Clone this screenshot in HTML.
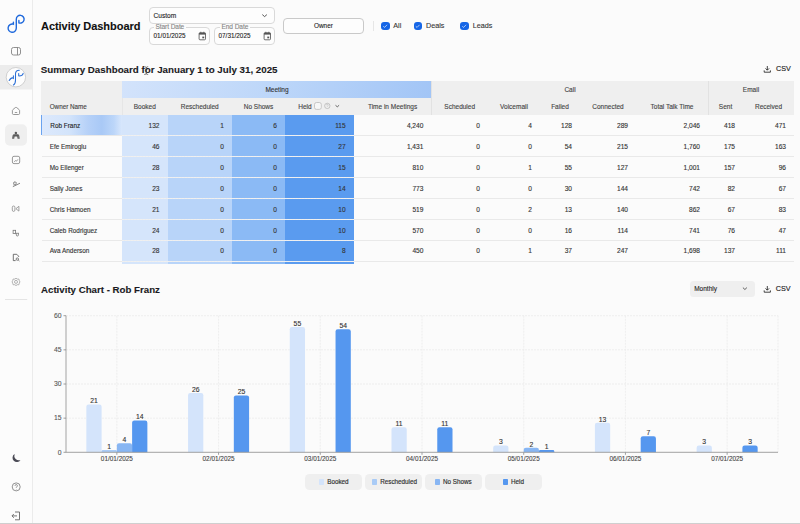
<!DOCTYPE html>
<html><head><meta charset="utf-8">
<style>
*{box-sizing:border-box;margin:0;padding:0}
html,body{width:800px;height:524px;overflow:hidden;background:#fbfbfb;font-family:"Liberation Sans",sans-serif;color:#222}
.a{position:absolute}
#side{left:0;top:0;width:32px;height:523px;background:#fcfcfc;border-right:1px solid #ebebeb;width:33px}
.ic{position:absolute;left:0;width:32px}
.t{position:absolute;white-space:nowrap;line-height:1;-webkit-text-stroke:0.1px currentColor}
.box{position:absolute;border:1px solid #d9d9d9;border-radius:4px;background:#fdfdfd}
.cb{position:absolute;width:8.5px;height:8.5px;border-radius:3px;background:#1565e6}
.cell{position:absolute;white-space:nowrap;line-height:1;font-size:6.4px;color:#333;-webkit-text-stroke:0.12px currentColor}
</style></head><body>
<!-- sidebar -->
<div id="side" class="a">
  <svg class="a" style="left:0;top:0" width="32" height="524" viewBox="0 0 32 524">
    <!-- logo -->
    <path d="M13.4 22.1V24.2A4.1 4.1 0 1 0 16.3 28.1V19.2A3.9 3.9 0 1 1 18.9 22.9V20.4" fill="none" stroke="#1f69dc" stroke-width="1.4" stroke-linecap="round"/>
    <!-- panel icon -->
    <rect x="11.5" y="47.5" width="9" height="7.5" rx="2" fill="none" stroke="#858585" stroke-width="0.9"/>
    <line x1="17.5" y1="47.5" x2="17.5" y2="55" stroke="#858585" stroke-width="0.9"/>
    <!-- highlight band -->
    <rect x="0" y="65" width="32" height="24.5" fill="#ececec"/>
    <circle cx="15.9" cy="77.2" r="9.7" fill="#fdfdfd" stroke="#c6c6c6" stroke-width="0.8"/>
    <path d="M9.2 80.5Q10.8 77.6 13.4 77.6M13.4 75.8V78.6M13.4 85Q15.5 84 15.5 80V73.8Q15.6 70.3 19.3 70.3M23.2 73.4Q22.6 76 19.2 76M18.7 73.4V75.8" fill="none" stroke="#2b6fd6" stroke-width="1.05" stroke-linecap="round"/>
    <!-- home -->
    <path d="M12.4 110.6Q12.4 110 12.9 109.6L15.3 107.6Q16 107 16.7 107.6L19.1 109.6Q19.6 110 19.6 110.6V113.4Q19.6 114.5 18.5 114.5H13.5Q12.4 114.5 12.4 113.4Z" fill="none" stroke="#858585" stroke-width="0.85" stroke-linejoin="round"/>
    <line x1="15.2" y1="112.5" x2="16.8" y2="112.5" stroke="#858585" stroke-width="0.8" stroke-linecap="round"/>
    <!-- active bg -->
    <rect x="5" y="124.3" width="22" height="21.4" rx="5" fill="#efefef"/>
    <circle cx="15.9" cy="133.1" r="1.25" fill="#5a5a5a"/>
    <path d="M12.1 138.7L12.6 135.6Q12.9 134.3 14.2 134.3H17.6Q18.9 134.3 19.2 135.6L19.7 138.7H17.6L17.2 136.4H14.6L14.2 138.7Z" fill="#5a5a5a"/>
    <path d="M13.3 135.5V138.7M18.5 135.5V138.7" stroke="#9a9a9a" stroke-width="0.35"/>
    <!-- chart icon -->
    <rect x="12.4" y="156.3" width="7.3" height="7.3" rx="1.6" fill="none" stroke="#858585" stroke-width="0.85"/>
    <path d="M14.2 161.7L15.6 160.6L16.4 161.2L17.9 159.4" fill="none" stroke="#777" stroke-width="0.75" stroke-linejoin="round"/>
    <!-- sparkle/wand -->
    <path d="M13.2 186.5L19.6 183.4" fill="none" stroke="#777" stroke-width="0.9" stroke-linecap="round"/>
    <path d="M14.9 181.4L15.4 182.7L16.8 182.9L15.7 183.8L16 185.1L14.9 184.4L13.8 185.1L14.1 183.8L13 182.9L14.4 182.7Z" fill="none" stroke="#777" stroke-width="0.7" stroke-linejoin="round"/>
    <!-- pill + triangle -->
    <rect x="12.3" y="206" width="2.6" height="5.4" rx="1.3" fill="none" stroke="#8a8a8a" stroke-width="0.8"/>
    <path d="M18.9 206.3L15.9 208.7L18.9 211.1Z" fill="none" stroke="#8a8a8a" stroke-width="0.8" stroke-linejoin="round"/>
    <!-- nodes -->
    <rect x="13.1" y="230.3" width="2.5" height="3.2" fill="none" stroke="#777" stroke-width="0.8"/>
    <path d="M15.6 233.3H19M16.3 233.3V235Q16.3 236 17.4 236Q18.4 236 18.4 235V233.3" fill="none" stroke="#777" stroke-width="0.8"/>
    <!-- doc search -->
    <path d="M16.8 254.3H13.3V260.6H15.6M16.8 254.3L18.6 256.2V257" fill="none" stroke="#5a5a5a" stroke-width="0.85" stroke-linejoin="round"/>
    <circle cx="17.3" cy="259.1" r="1.2" fill="none" stroke="#5a5a5a" stroke-width="0.75"/>
    <line x1="18.2" y1="260" x2="19.4" y2="261" stroke="#5a5a5a" stroke-width="0.75"/>
    <!-- gear -->
    <path d="M16 278.2L17.2 279.1L18.8 279L19.3 280.6L19.9 281.9L19.3 283.2L18.8 284.8L17.2 284.7L16 285.6L14.8 284.7L13.2 284.8L12.7 283.2L12.1 281.9L12.7 280.6L13.2 279L14.8 279.1Z" fill="none" stroke="#999" stroke-width="0.75" stroke-linejoin="round"/>
    <circle cx="16" cy="281.9" r="1.5" fill="none" stroke="#999" stroke-width="0.75"/>
    <!-- separator -->
    <line x1="5" y1="299.5" x2="27.2" y2="299.5" stroke="#e4e4e4" stroke-width="1"/>
    <!-- moon -->
    <path d="M14.6 454.1A4.3 4.3 0 1 0 20.5 460A4.6 4.6 0 0 1 14.6 454.1Z" fill="#4a4a55"/>
    <!-- help -->
    <circle cx="16.2" cy="486.9" r="4" fill="none" stroke="#777" stroke-width="0.8"/>
    <path d="M15 485.8a1.2 1.2 0 1 1 1.8 1c-0.5 0.3-0.6 0.5-0.6 1" fill="none" stroke="#777" stroke-width="0.8"/>
    <circle cx="16.2" cy="489.3" r="0.35" fill="#777"/>
    <!-- logout -->
    <path d="M15 512H19.5V519.8H15M17 515.9H12M13.8 514L12 515.9L13.8 517.8" fill="none" stroke="#666" stroke-width="0.9" stroke-linejoin="round"/>
  </svg>
</div>
<div class="a" style="left:0;top:523px;width:800px;height:1px;background:#cfcfcf"></div>

<!-- header -->
<div class="t" style="left:41px;top:20.5px;font-size:11px;font-weight:bold;color:#111;letter-spacing:-0.05px">Activity Dashboard</div>
<div class="box" style="left:149px;top:7px;width:126px;height:16.5px"></div>
<div class="t" style="left:153.5px;top:13px;font-size:6.6px;color:#222">Custom</div>
<svg class="a" style="left:261px;top:13px" width="8" height="6"><path d="M1.3 1.6L3.6 3.6L5.9 1.6" fill="none" stroke="#444" stroke-width="0.9"/></svg>

<div class="box" style="left:149px;top:27px;width:61px;height:17.5px"></div>
<div class="t" style="left:154px;top:24.2px;font-size:6.6px;color:#858585;letter-spacing:-0.1px;background:#fbfbfb;padding:0 1.5px">Start Date</div>
<div class="t" style="left:153.5px;top:32.5px;font-size:6.4px;color:#222">01/01/2025</div>
<svg class="a" style="left:197px;top:31px" width="10" height="10"><rect x="2.1" y="1.8" width="6.4" height="7" rx="0.9" fill="none" stroke="#555" stroke-width="0.85"/><rect x="2.1" y="1.8" width="6.4" height="1.8" fill="#555"/><path d="M3.8 0.7V2M6.8 0.7V2" stroke="#555" stroke-width="0.7"/><rect x="5.3" y="5.6" width="1.9" height="1.7" fill="#555"/></svg>

<div class="box" style="left:214px;top:27px;width:61px;height:17.5px"></div>
<div class="t" style="left:220px;top:24.2px;font-size:6.6px;color:#858585;letter-spacing:-0.1px;background:#fbfbfb;padding:0 1.5px">End Date</div>
<div class="t" style="left:218.5px;top:32.5px;font-size:6.4px;color:#222">07/31/2025</div>
<svg class="a" style="left:262px;top:31px" width="10" height="10"><rect x="2.1" y="1.8" width="6.4" height="7" rx="0.9" fill="none" stroke="#555" stroke-width="0.85"/><rect x="2.1" y="1.8" width="6.4" height="1.8" fill="#555"/><path d="M3.8 0.7V2M6.8 0.7V2" stroke="#555" stroke-width="0.7"/><rect x="5.3" y="5.6" width="1.9" height="1.7" fill="#555"/></svg>

<div class="box" style="left:283px;top:17.5px;width:81px;height:16px;border-color:#c9c9c9"></div>
<div class="t" style="left:314px;top:22.5px;font-size:6.4px;color:#222">Owner</div>
<div class="a" style="left:372.5px;top:20.5px;width:1px;height:10px;background:#e6e6e6"></div>

<div class="cb" style="left:381px;top:21.6px"></div>
<div class="cb" style="left:413.5px;top:21.6px"></div>
<div class="cb" style="left:460px;top:21.6px"></div>
<svg class="a" style="left:381px;top:21.6px" width="100" height="9">
  <path d="M2.6 4.6L3.6 5.4L5.8 3.1" fill="none" stroke="#e8f0fd" stroke-width="0.7" stroke-linecap="round" stroke-linejoin="round"/>
  <path transform="translate(32.5 0)" d="M2.6 4.6L3.6 5.4L5.8 3.1" fill="none" stroke="#e8f0fd" stroke-width="0.7" stroke-linecap="round" stroke-linejoin="round"/>
  <path transform="translate(79 0)" d="M2.6 4.6L3.6 5.4L5.8 3.1" fill="none" stroke="#e8f0fd" stroke-width="0.7" stroke-linecap="round" stroke-linejoin="round"/>
</svg>
<div class="t" style="left:393.3px;top:22px;font-size:7.2px;color:#333">All</div>
<div class="t" style="left:426px;top:22px;font-size:7.2px;color:#333">Deals</div>
<div class="t" style="left:472.7px;top:22px;font-size:7.2px;color:#333">Leads</div>

<!-- summary title -->
<div class="t" style="left:40.7px;top:64.8px;font-size:9.75px;font-weight:bold;color:#1a1a22">Summary Dashboard for January 1 to July 31, 2025</div>
<svg class="a" style="left:763px;top:65px" width="9" height="9"><path d="M4.3 1V5.1M2.5 3.4L4.3 5.2L6.1 3.4M1.2 5.4V7.2H7.4V5.4" fill="none" stroke="#222" stroke-width="0.85"/></svg>
<div class="t" style="left:776px;top:65.3px;font-size:7.2px;color:#1e1e1e;-webkit-text-stroke:0.15px #1e1e1e">CSV</div>

<div class="a" style="left:41px;top:81px;width:753px;height:34px;background:#efefef"></div>
<div class="a" style="left:122px;top:81px;width:309.4px;height:16.599999999999994px;background:linear-gradient(100deg,#d3e3fb 0%,#bcd6f9 50%,#a2c5f6 100%)"></div>
<div class="a" style="left:431.4px;top:81px;width:0.8px;height:34px;background:#e2e2e2"></div>
<div class="a" style="left:708px;top:81px;width:0.8px;height:34px;background:#e2e2e2"></div>
<div class="a" style="left:122px;top:97.6px;width:0.8px;height:17.400000000000006px;background:#e6e6e6"></div>
<div class="cell" style="left:227px;width:100px;text-align:center;top:87px;font-size:6.5px;color:#333;">Meeting</div>
<div class="cell" style="left:520px;width:100px;text-align:center;top:87px;font-size:6.5px;color:#444;">Call</div>
<div class="cell" style="left:701px;width:100px;text-align:center;top:87px;font-size:6.5px;color:#444;">Email</div>
<div class="cell" style="left:49.7px;top:104.1px;font-size:6.3px;color:#444;">Owner Name</div>
<div class="cell" style="left:94.75px;width:100px;text-align:center;top:104.1px;font-size:6.5px;color:#444;">Booked</div>
<div class="cell" style="left:149.75px;width:100px;text-align:center;top:104.1px;font-size:6.5px;color:#444;">Rescheduled</div>
<div class="cell" style="left:208.5px;width:100px;text-align:center;top:104.1px;font-size:6.5px;color:#444;">No Shows</div>
<div class="cell" style="left:298.2px;top:104.1px;font-size:6.5px;color:#444;">Held</div>
<div class="cell" style="left:342.54999999999995px;width:100px;text-align:center;top:104.1px;font-size:6.5px;color:#444;">Time in Meetings</div>
<div class="cell" style="left:409.7px;width:100px;text-align:center;top:104.1px;font-size:6.5px;color:#444;">Scheduled</div>
<div class="cell" style="left:464.0px;width:100px;text-align:center;top:104.1px;font-size:6.5px;color:#444;">Voicemail</div>
<div class="cell" style="left:510.0px;width:100px;text-align:center;top:104.1px;font-size:6.5px;color:#444;">Failed</div>
<div class="cell" style="left:558.0px;width:100px;text-align:center;top:104.1px;font-size:6.5px;color:#444;">Connected</div>
<div class="cell" style="left:622.0px;width:100px;text-align:center;top:104.1px;font-size:6.5px;color:#444;">Total Talk Time</div>
<div class="cell" style="left:675.5px;width:100px;text-align:center;top:104.1px;font-size:6.5px;color:#444;">Sent</div>
<div class="cell" style="left:718.5px;width:100px;text-align:center;top:104.1px;font-size:6.5px;color:#444;">Received</div>
<svg class="a" style="left:313px;top:100.8px" width="30" height="10"><rect x="1.5" y="1.5" width="6.8" height="6.9" rx="2" fill="#f7f7f7" stroke="#b8b8b8" stroke-width="0.75"/><circle cx="14.3" cy="4.9" r="2.7" fill="none" stroke="#aaa" stroke-width="0.6"/><path d="M13.4 4.2a0.9 0.9 0 1 1 1.3 0.8c-0.3 0.2-0.4 0.3-0.4 0.7" fill="none" stroke="#aaa" stroke-width="0.5"/><path d="M22.5 4.3L24.3 5.8L26.1 4.3" fill="none" stroke="#444" stroke-width="0.8"/></svg>
<div class="a" style="left:122px;top:115px;width:45.5px;height:149.39999999999998px;background:#d5e5fb"></div>
<div class="a" style="left:167.5px;top:115px;width:64.5px;height:149.39999999999998px;background:#b8d4f9"></div>
<div class="a" style="left:232px;top:115px;width:53px;height:149.39999999999998px;background:#8bbaf5"></div>
<div class="a" style="left:285px;top:115px;width:68.69999999999999px;height:149.39999999999998px;background:#5a9bef"></div>
<div class="a" style="left:41.5px;top:135.2px;width:752.5px;height:1px;background:#e9e9e9"></div>
<div class="a" style="left:122px;top:135.2px;width:231.7px;height:1px;background:repeating-linear-gradient(90deg,rgba(255,255,255,0.32) 0 2px,rgba(255,255,255,0.22) 2px 3px)"></div>
<div class="a" style="left:41.5px;top:156.1px;width:752.5px;height:1px;background:#e9e9e9"></div>
<div class="a" style="left:122px;top:156.1px;width:231.7px;height:1px;background:repeating-linear-gradient(90deg,rgba(255,255,255,0.32) 0 2px,rgba(255,255,255,0.22) 2px 3px)"></div>
<div class="a" style="left:41.5px;top:177.0px;width:752.5px;height:1px;background:#e9e9e9"></div>
<div class="a" style="left:122px;top:177.0px;width:231.7px;height:1px;background:repeating-linear-gradient(90deg,rgba(255,255,255,0.32) 0 2px,rgba(255,255,255,0.22) 2px 3px)"></div>
<div class="a" style="left:41.5px;top:197.89999999999998px;width:752.5px;height:1px;background:#e9e9e9"></div>
<div class="a" style="left:122px;top:197.89999999999998px;width:231.7px;height:1px;background:repeating-linear-gradient(90deg,rgba(255,255,255,0.32) 0 2px,rgba(255,255,255,0.22) 2px 3px)"></div>
<div class="a" style="left:41.5px;top:218.8px;width:752.5px;height:1px;background:#e9e9e9"></div>
<div class="a" style="left:122px;top:218.8px;width:231.7px;height:1px;background:repeating-linear-gradient(90deg,rgba(255,255,255,0.32) 0 2px,rgba(255,255,255,0.22) 2px 3px)"></div>
<div class="a" style="left:41.5px;top:239.7px;width:752.5px;height:1px;background:#e9e9e9"></div>
<div class="a" style="left:122px;top:239.7px;width:231.7px;height:1px;background:repeating-linear-gradient(90deg,rgba(255,255,255,0.32) 0 2px,rgba(255,255,255,0.22) 2px 3px)"></div>
<div class="a" style="left:41.5px;top:260.59999999999997px;width:752.5px;height:1px;background:#e9e9e9"></div>
<div class="a" style="left:122px;top:260.59999999999997px;width:231.7px;height:1px;background:repeating-linear-gradient(90deg,rgba(255,255,255,0.32) 0 2px,rgba(255,255,255,0.22) 2px 3px)"></div>
<div class="a" style="left:41px;top:115px;width:81px;height:20.2px;background:linear-gradient(90deg,#dde9fc 0%,#d3e4fb 35%,#b6d1f8 58%,#a9c9f6 75%,#bcd6f9 90%,#d8e7fc 100%)"></div>
<div class="a" style="left:41px;top:115px;width:1.3px;height:20.2px;background:#6aa3ef"></div>
<div class="cell" style="left:50.3px;top:123.0px;font-size:6.4px;color:#222;">Rob Franz</div>
<div class="cell" style="left:99.5px;width:60px;text-align:right;top:123.0px;font-size:6.6px;color:#333;">132</div>
<div class="cell" style="left:164px;width:60px;text-align:right;top:123.0px;font-size:6.6px;color:#333;">1</div>
<div class="cell" style="left:217px;width:60px;text-align:right;top:123.0px;font-size:6.6px;color:#333;">6</div>
<div class="cell" style="left:285.7px;width:60px;text-align:right;top:123.0px;font-size:6.6px;color:#333;">115</div>
<div class="cell" style="left:363.4px;width:60px;text-align:right;top:123.0px;font-size:6.6px;color:#333;">4,240</div>
<div class="cell" style="left:420px;width:60px;text-align:right;top:123.0px;font-size:6.6px;color:#333;">0</div>
<div class="cell" style="left:472px;width:60px;text-align:right;top:123.0px;font-size:6.6px;color:#333;">4</div>
<div class="cell" style="left:512px;width:60px;text-align:right;top:123.0px;font-size:6.6px;color:#333;">128</div>
<div class="cell" style="left:568px;width:60px;text-align:right;top:123.0px;font-size:6.6px;color:#333;">289</div>
<div class="cell" style="left:640px;width:60px;text-align:right;top:123.0px;font-size:6.6px;color:#333;">2,046</div>
<div class="cell" style="left:675px;width:60px;text-align:right;top:123.0px;font-size:6.6px;color:#333;">418</div>
<div class="cell" style="left:726px;width:60px;text-align:right;top:123.0px;font-size:6.6px;color:#333;">471</div>
<div class="cell" style="left:49.7px;top:143.89999999999998px;font-size:6.4px;color:#333;">Efe Emiroglu</div>
<div class="cell" style="left:99.5px;width:60px;text-align:right;top:143.89999999999998px;font-size:6.6px;color:#333;">46</div>
<div class="cell" style="left:164px;width:60px;text-align:right;top:143.89999999999998px;font-size:6.6px;color:#333;">0</div>
<div class="cell" style="left:217px;width:60px;text-align:right;top:143.89999999999998px;font-size:6.6px;color:#333;">0</div>
<div class="cell" style="left:285.7px;width:60px;text-align:right;top:143.89999999999998px;font-size:6.6px;color:#333;">27</div>
<div class="cell" style="left:363.4px;width:60px;text-align:right;top:143.89999999999998px;font-size:6.6px;color:#333;">1,431</div>
<div class="cell" style="left:420px;width:60px;text-align:right;top:143.89999999999998px;font-size:6.6px;color:#333;">0</div>
<div class="cell" style="left:472px;width:60px;text-align:right;top:143.89999999999998px;font-size:6.6px;color:#333;">0</div>
<div class="cell" style="left:512px;width:60px;text-align:right;top:143.89999999999998px;font-size:6.6px;color:#333;">54</div>
<div class="cell" style="left:568px;width:60px;text-align:right;top:143.89999999999998px;font-size:6.6px;color:#333;">215</div>
<div class="cell" style="left:640px;width:60px;text-align:right;top:143.89999999999998px;font-size:6.6px;color:#333;">1,760</div>
<div class="cell" style="left:675px;width:60px;text-align:right;top:143.89999999999998px;font-size:6.6px;color:#333;">175</div>
<div class="cell" style="left:726px;width:60px;text-align:right;top:143.89999999999998px;font-size:6.6px;color:#333;">163</div>
<div class="cell" style="left:49.7px;top:164.79999999999998px;font-size:6.4px;color:#333;">Mo Ellenger</div>
<div class="cell" style="left:99.5px;width:60px;text-align:right;top:164.79999999999998px;font-size:6.6px;color:#333;">28</div>
<div class="cell" style="left:164px;width:60px;text-align:right;top:164.79999999999998px;font-size:6.6px;color:#333;">0</div>
<div class="cell" style="left:217px;width:60px;text-align:right;top:164.79999999999998px;font-size:6.6px;color:#333;">0</div>
<div class="cell" style="left:285.7px;width:60px;text-align:right;top:164.79999999999998px;font-size:6.6px;color:#333;">15</div>
<div class="cell" style="left:363.4px;width:60px;text-align:right;top:164.79999999999998px;font-size:6.6px;color:#333;">810</div>
<div class="cell" style="left:420px;width:60px;text-align:right;top:164.79999999999998px;font-size:6.6px;color:#333;">0</div>
<div class="cell" style="left:472px;width:60px;text-align:right;top:164.79999999999998px;font-size:6.6px;color:#333;">1</div>
<div class="cell" style="left:512px;width:60px;text-align:right;top:164.79999999999998px;font-size:6.6px;color:#333;">55</div>
<div class="cell" style="left:568px;width:60px;text-align:right;top:164.79999999999998px;font-size:6.6px;color:#333;">127</div>
<div class="cell" style="left:640px;width:60px;text-align:right;top:164.79999999999998px;font-size:6.6px;color:#333;">1,001</div>
<div class="cell" style="left:675px;width:60px;text-align:right;top:164.79999999999998px;font-size:6.6px;color:#333;">157</div>
<div class="cell" style="left:726px;width:60px;text-align:right;top:164.79999999999998px;font-size:6.6px;color:#333;">96</div>
<div class="cell" style="left:49.7px;top:185.7px;font-size:6.4px;color:#333;">Sally Jones</div>
<div class="cell" style="left:99.5px;width:60px;text-align:right;top:185.7px;font-size:6.6px;color:#333;">23</div>
<div class="cell" style="left:164px;width:60px;text-align:right;top:185.7px;font-size:6.6px;color:#333;">0</div>
<div class="cell" style="left:217px;width:60px;text-align:right;top:185.7px;font-size:6.6px;color:#333;">0</div>
<div class="cell" style="left:285.7px;width:60px;text-align:right;top:185.7px;font-size:6.6px;color:#333;">14</div>
<div class="cell" style="left:363.4px;width:60px;text-align:right;top:185.7px;font-size:6.6px;color:#333;">773</div>
<div class="cell" style="left:420px;width:60px;text-align:right;top:185.7px;font-size:6.6px;color:#333;">0</div>
<div class="cell" style="left:472px;width:60px;text-align:right;top:185.7px;font-size:6.6px;color:#333;">0</div>
<div class="cell" style="left:512px;width:60px;text-align:right;top:185.7px;font-size:6.6px;color:#333;">30</div>
<div class="cell" style="left:568px;width:60px;text-align:right;top:185.7px;font-size:6.6px;color:#333;">144</div>
<div class="cell" style="left:640px;width:60px;text-align:right;top:185.7px;font-size:6.6px;color:#333;">742</div>
<div class="cell" style="left:675px;width:60px;text-align:right;top:185.7px;font-size:6.6px;color:#333;">82</div>
<div class="cell" style="left:726px;width:60px;text-align:right;top:185.7px;font-size:6.6px;color:#333;">67</div>
<div class="cell" style="left:49.7px;top:206.59999999999997px;font-size:6.4px;color:#333;">Chris Hamoen</div>
<div class="cell" style="left:99.5px;width:60px;text-align:right;top:206.59999999999997px;font-size:6.6px;color:#333;">21</div>
<div class="cell" style="left:164px;width:60px;text-align:right;top:206.59999999999997px;font-size:6.6px;color:#333;">0</div>
<div class="cell" style="left:217px;width:60px;text-align:right;top:206.59999999999997px;font-size:6.6px;color:#333;">0</div>
<div class="cell" style="left:285.7px;width:60px;text-align:right;top:206.59999999999997px;font-size:6.6px;color:#333;">10</div>
<div class="cell" style="left:363.4px;width:60px;text-align:right;top:206.59999999999997px;font-size:6.6px;color:#333;">519</div>
<div class="cell" style="left:420px;width:60px;text-align:right;top:206.59999999999997px;font-size:6.6px;color:#333;">0</div>
<div class="cell" style="left:472px;width:60px;text-align:right;top:206.59999999999997px;font-size:6.6px;color:#333;">2</div>
<div class="cell" style="left:512px;width:60px;text-align:right;top:206.59999999999997px;font-size:6.6px;color:#333;">13</div>
<div class="cell" style="left:568px;width:60px;text-align:right;top:206.59999999999997px;font-size:6.6px;color:#333;">140</div>
<div class="cell" style="left:640px;width:60px;text-align:right;top:206.59999999999997px;font-size:6.6px;color:#333;">862</div>
<div class="cell" style="left:675px;width:60px;text-align:right;top:206.59999999999997px;font-size:6.6px;color:#333;">67</div>
<div class="cell" style="left:726px;width:60px;text-align:right;top:206.59999999999997px;font-size:6.6px;color:#333;">83</div>
<div class="cell" style="left:49.7px;top:227.5px;font-size:6.4px;color:#333;">Caleb Rodriguez</div>
<div class="cell" style="left:99.5px;width:60px;text-align:right;top:227.5px;font-size:6.6px;color:#333;">24</div>
<div class="cell" style="left:164px;width:60px;text-align:right;top:227.5px;font-size:6.6px;color:#333;">0</div>
<div class="cell" style="left:217px;width:60px;text-align:right;top:227.5px;font-size:6.6px;color:#333;">0</div>
<div class="cell" style="left:285.7px;width:60px;text-align:right;top:227.5px;font-size:6.6px;color:#333;">10</div>
<div class="cell" style="left:363.4px;width:60px;text-align:right;top:227.5px;font-size:6.6px;color:#333;">570</div>
<div class="cell" style="left:420px;width:60px;text-align:right;top:227.5px;font-size:6.6px;color:#333;">0</div>
<div class="cell" style="left:472px;width:60px;text-align:right;top:227.5px;font-size:6.6px;color:#333;">0</div>
<div class="cell" style="left:512px;width:60px;text-align:right;top:227.5px;font-size:6.6px;color:#333;">16</div>
<div class="cell" style="left:568px;width:60px;text-align:right;top:227.5px;font-size:6.6px;color:#333;">114</div>
<div class="cell" style="left:640px;width:60px;text-align:right;top:227.5px;font-size:6.6px;color:#333;">741</div>
<div class="cell" style="left:675px;width:60px;text-align:right;top:227.5px;font-size:6.6px;color:#333;">76</div>
<div class="cell" style="left:726px;width:60px;text-align:right;top:227.5px;font-size:6.6px;color:#333;">47</div>
<div class="cell" style="left:49.7px;top:248.39999999999998px;font-size:6.4px;color:#333;">Ava Anderson</div>
<div class="cell" style="left:99.5px;width:60px;text-align:right;top:248.39999999999998px;font-size:6.6px;color:#333;">28</div>
<div class="cell" style="left:164px;width:60px;text-align:right;top:248.39999999999998px;font-size:6.6px;color:#333;">0</div>
<div class="cell" style="left:217px;width:60px;text-align:right;top:248.39999999999998px;font-size:6.6px;color:#333;">0</div>
<div class="cell" style="left:285.7px;width:60px;text-align:right;top:248.39999999999998px;font-size:6.6px;color:#333;">8</div>
<div class="cell" style="left:363.4px;width:60px;text-align:right;top:248.39999999999998px;font-size:6.6px;color:#333;">450</div>
<div class="cell" style="left:420px;width:60px;text-align:right;top:248.39999999999998px;font-size:6.6px;color:#333;">0</div>
<div class="cell" style="left:472px;width:60px;text-align:right;top:248.39999999999998px;font-size:6.6px;color:#333;">1</div>
<div class="cell" style="left:512px;width:60px;text-align:right;top:248.39999999999998px;font-size:6.6px;color:#333;">37</div>
<div class="cell" style="left:568px;width:60px;text-align:right;top:248.39999999999998px;font-size:6.6px;color:#333;">247</div>
<div class="cell" style="left:640px;width:60px;text-align:right;top:248.39999999999998px;font-size:6.6px;color:#333;">1,698</div>
<div class="cell" style="left:675px;width:60px;text-align:right;top:248.39999999999998px;font-size:6.6px;color:#333;">137</div>
<div class="cell" style="left:726px;width:60px;text-align:right;top:248.39999999999998px;font-size:6.6px;color:#333;">111</div>
<svg class="a" style="left:140px;top:64px;z-index:5" width="12" height="14" viewBox="140 64 12 14"><path d="M144.6 74.5Q145.4 74.5 146.2 73.8Q147 74.5 147.8 74.5M144.6 66.7Q145.4 66.7 146.2 67.4Q147 66.7 147.8 66.7" fill="none" stroke="#fff" stroke-width="1.4" stroke-linecap="round"/><path d="M146.2 67.4V73.8M144.6 74.5Q145.4 74.5 146.2 73.8Q147 74.5 147.8 74.5M144.6 66.7Q145.4 66.7 146.2 67.4Q147 66.7 147.8 66.7" fill="none" stroke="#333" stroke-width="0.65" stroke-linecap="round"/></svg>

<!-- chart title -->
<div class="t" style="left:41px;top:284.5px;font-size:9.7px;font-weight:bold;color:#1a1a22">Activity Chart - Rob Franz</div>
<div class="a" style="left:689.7px;top:281px;width:65.6px;height:15.7px;background:#efefef;border-radius:3.5px"></div>
<div class="t" style="left:694.2px;top:285.7px;font-size:6.5px;color:#222">Monthly</div>
<svg class="a" style="left:741px;top:286px" width="8" height="6"><path d="M1.9 1.6L3.9 3.5L5.9 1.6" fill="none" stroke="#444" stroke-width="0.85"/></svg>
<svg class="a" style="left:763px;top:284.5px" width="9" height="9"><path d="M4.3 1V5.1M2.5 3.4L4.3 5.2L6.1 3.4M1.2 5.4V7.2H7.4V5.4" fill="none" stroke="#222" stroke-width="0.85"/></svg>
<div class="t" style="left:775.7px;top:285.3px;font-size:7.2px;color:#1e1e1e;-webkit-text-stroke:0.15px #1e1e1e">CSV</div>

<svg class="a" style="left:0;top:0" width="800" height="524" viewBox="0 0 800 524">
<line x1="66" y1="418.15" x2="778" y2="418.15" stroke="#ebebeb" stroke-width="0.8" stroke-dasharray="2 1"/>
<line x1="66" y1="384.00" x2="778" y2="384.00" stroke="#ebebeb" stroke-width="0.8" stroke-dasharray="2 1"/>
<line x1="66" y1="349.85" x2="778" y2="349.85" stroke="#ebebeb" stroke-width="0.8" stroke-dasharray="2 1"/>
<line x1="66" y1="315.70" x2="778" y2="315.70" stroke="#ebebeb" stroke-width="0.8" stroke-dasharray="2 1"/>
<line x1="116.86" y1="315.70" x2="116.86" y2="452.3" stroke="#ebebeb" stroke-width="0.8" stroke-dasharray="2 1"/>
<line x1="218.57" y1="315.70" x2="218.57" y2="452.3" stroke="#ebebeb" stroke-width="0.8" stroke-dasharray="2 1"/>
<line x1="320.29" y1="315.70" x2="320.29" y2="452.3" stroke="#ebebeb" stroke-width="0.8" stroke-dasharray="2 1"/>
<line x1="422.00" y1="315.70" x2="422.00" y2="452.3" stroke="#ebebeb" stroke-width="0.8" stroke-dasharray="2 1"/>
<line x1="523.71" y1="315.70" x2="523.71" y2="452.3" stroke="#ebebeb" stroke-width="0.8" stroke-dasharray="2 1"/>
<line x1="625.43" y1="315.70" x2="625.43" y2="452.3" stroke="#ebebeb" stroke-width="0.8" stroke-dasharray="2 1"/>
<line x1="727.14" y1="315.70" x2="727.14" y2="452.3" stroke="#ebebeb" stroke-width="0.8" stroke-dasharray="2 1"/>
<line x1="778.00" y1="315.70" x2="778.00" y2="452.3" stroke="#ebebeb" stroke-width="0.8" stroke-dasharray="2 1"/>
<path d="M86.34 452.3V406.69Q86.34 404.49 88.54 404.49H99.40Q101.60 404.49 101.60 406.69V452.3Z" fill="#d4e4fb"/>
<text x="93.97" y="403.49" text-anchor="middle" font-size="6.8" fill="#333" stroke="#333" stroke-width="0.12" font-family="Liberation Sans">21</text>
<path d="M101.60 452.3V451.16Q101.60 450.02 102.74 450.02H115.72Q116.86 450.02 116.86 451.16V452.3Z" fill="#a9cbf6"/>
<text x="109.23" y="449.02" text-anchor="middle" font-size="6.8" fill="#333" stroke="#333" stroke-width="0.12" font-family="Liberation Sans">1</text>
<path d="M116.86 452.3V445.39Q116.86 443.19 119.06 443.19H129.91Q132.11 443.19 132.11 445.39V452.3Z" fill="#88b6f3"/>
<text x="124.49" y="442.19" text-anchor="middle" font-size="6.8" fill="#333" stroke="#333" stroke-width="0.12" font-family="Liberation Sans">4</text>
<path d="M132.11 452.3V422.63Q132.11 420.43 134.31 420.43H145.17Q147.37 420.43 147.37 422.63V452.3Z" fill="#5597ef"/>
<text x="139.74" y="419.43" text-anchor="middle" font-size="6.8" fill="#333" stroke="#333" stroke-width="0.12" font-family="Liberation Sans">14</text>
<line x1="116.86" y1="452.3" x2="116.86" y2="454.8" stroke="#888" stroke-width="0.8"/>
<text x="116.86" y="461.20" text-anchor="middle" font-size="6.4" fill="#444" stroke="#444" stroke-width="0.1" font-family="Liberation Sans">01/01/2025</text>
<path d="M188.06 452.3V395.31Q188.06 393.11 190.26 393.11H201.11Q203.31 393.11 203.31 395.31V452.3Z" fill="#d4e4fb"/>
<text x="195.69" y="392.11" text-anchor="middle" font-size="6.8" fill="#333" stroke="#333" stroke-width="0.12" font-family="Liberation Sans">26</text>
<path d="M233.83 452.3V397.58Q233.83 395.38 236.03 395.38H246.89Q249.09 395.38 249.09 397.58V452.3Z" fill="#5597ef"/>
<text x="241.46" y="394.38" text-anchor="middle" font-size="6.8" fill="#333" stroke="#333" stroke-width="0.12" font-family="Liberation Sans">25</text>
<line x1="218.57" y1="452.3" x2="218.57" y2="454.8" stroke="#888" stroke-width="0.8"/>
<text x="218.57" y="461.20" text-anchor="middle" font-size="6.4" fill="#444" stroke="#444" stroke-width="0.1" font-family="Liberation Sans">02/01/2025</text>
<path d="M289.77 452.3V329.28Q289.77 327.08 291.97 327.08H302.83Q305.03 327.08 305.03 329.28V452.3Z" fill="#d4e4fb"/>
<text x="297.40" y="326.08" text-anchor="middle" font-size="6.8" fill="#333" stroke="#333" stroke-width="0.12" font-family="Liberation Sans">55</text>
<path d="M335.54 452.3V331.56Q335.54 329.36 337.74 329.36H348.60Q350.80 329.36 350.80 331.56V452.3Z" fill="#5597ef"/>
<text x="343.17" y="328.36" text-anchor="middle" font-size="6.8" fill="#333" stroke="#333" stroke-width="0.12" font-family="Liberation Sans">54</text>
<line x1="320.29" y1="452.3" x2="320.29" y2="454.8" stroke="#888" stroke-width="0.8"/>
<text x="320.29" y="461.20" text-anchor="middle" font-size="6.4" fill="#444" stroke="#444" stroke-width="0.1" font-family="Liberation Sans">03/01/2025</text>
<path d="M391.49 452.3V429.46Q391.49 427.26 393.69 427.26H404.54Q406.74 427.26 406.74 429.46V452.3Z" fill="#d4e4fb"/>
<text x="399.11" y="426.26" text-anchor="middle" font-size="6.8" fill="#333" stroke="#333" stroke-width="0.12" font-family="Liberation Sans">11</text>
<path d="M437.26 452.3V429.46Q437.26 427.26 439.46 427.26H450.31Q452.51 427.26 452.51 429.46V452.3Z" fill="#5597ef"/>
<text x="444.89" y="426.26" text-anchor="middle" font-size="6.8" fill="#333" stroke="#333" stroke-width="0.12" font-family="Liberation Sans">11</text>
<line x1="422.00" y1="452.3" x2="422.00" y2="454.8" stroke="#888" stroke-width="0.8"/>
<text x="422.00" y="461.20" text-anchor="middle" font-size="6.4" fill="#444" stroke="#444" stroke-width="0.1" font-family="Liberation Sans">04/01/2025</text>
<path d="M493.20 452.3V447.67Q493.20 445.47 495.40 445.47H506.26Q508.46 445.47 508.46 447.67V452.3Z" fill="#d4e4fb"/>
<text x="500.83" y="444.47" text-anchor="middle" font-size="6.8" fill="#333" stroke="#333" stroke-width="0.12" font-family="Liberation Sans">3</text>
<path d="M523.71 452.3V449.95Q523.71 447.75 525.91 447.75H536.77Q538.97 447.75 538.97 449.95V452.3Z" fill="#88b6f3"/>
<text x="531.34" y="446.75" text-anchor="middle" font-size="6.8" fill="#333" stroke="#333" stroke-width="0.12" font-family="Liberation Sans">2</text>
<path d="M538.97 452.3V451.16Q538.97 450.02 540.11 450.02H553.09Q554.23 450.02 554.23 451.16V452.3Z" fill="#5597ef"/>
<text x="546.60" y="449.02" text-anchor="middle" font-size="6.8" fill="#333" stroke="#333" stroke-width="0.12" font-family="Liberation Sans">1</text>
<line x1="523.71" y1="452.3" x2="523.71" y2="454.8" stroke="#888" stroke-width="0.8"/>
<text x="523.71" y="461.20" text-anchor="middle" font-size="6.4" fill="#444" stroke="#444" stroke-width="0.1" font-family="Liberation Sans">05/01/2025</text>
<path d="M594.91 452.3V424.90Q594.91 422.70 597.11 422.70H607.97Q610.17 422.70 610.17 424.90V452.3Z" fill="#d4e4fb"/>
<text x="602.54" y="421.70" text-anchor="middle" font-size="6.8" fill="#333" stroke="#333" stroke-width="0.12" font-family="Liberation Sans">13</text>
<path d="M640.69 452.3V438.56Q640.69 436.36 642.89 436.36H653.74Q655.94 436.36 655.94 438.56V452.3Z" fill="#5597ef"/>
<text x="648.31" y="435.36" text-anchor="middle" font-size="6.8" fill="#333" stroke="#333" stroke-width="0.12" font-family="Liberation Sans">7</text>
<line x1="625.43" y1="452.3" x2="625.43" y2="454.8" stroke="#888" stroke-width="0.8"/>
<text x="625.43" y="461.20" text-anchor="middle" font-size="6.4" fill="#444" stroke="#444" stroke-width="0.1" font-family="Liberation Sans">06/01/2025</text>
<path d="M696.63 452.3V447.67Q696.63 445.47 698.83 445.47H709.69Q711.89 445.47 711.89 447.67V452.3Z" fill="#d4e4fb"/>
<text x="704.26" y="444.47" text-anchor="middle" font-size="6.8" fill="#333" stroke="#333" stroke-width="0.12" font-family="Liberation Sans">3</text>
<path d="M742.40 452.3V447.67Q742.40 445.47 744.60 445.47H755.46Q757.66 445.47 757.66 447.67V452.3Z" fill="#5597ef"/>
<text x="750.03" y="444.47" text-anchor="middle" font-size="6.8" fill="#333" stroke="#333" stroke-width="0.12" font-family="Liberation Sans">3</text>
<line x1="727.14" y1="452.3" x2="727.14" y2="454.8" stroke="#888" stroke-width="0.8"/>
<text x="727.14" y="461.20" text-anchor="middle" font-size="6.4" fill="#444" stroke="#444" stroke-width="0.1" font-family="Liberation Sans">07/01/2025</text>
<line x1="66" y1="315.70" x2="66" y2="452.3" stroke="#999" stroke-width="0.9"/>
<line x1="66" y1="452.3" x2="778" y2="452.3" stroke="#999" stroke-width="0.9"/>
<line x1="63.5" y1="452.30" x2="66" y2="452.30" stroke="#888" stroke-width="0.8"/>
<text x="61.5" y="454.60" text-anchor="end" font-size="6.8" fill="#555" stroke="#555" stroke-width="0.1" font-family="Liberation Sans">0</text>
<line x1="63.5" y1="418.15" x2="66" y2="418.15" stroke="#888" stroke-width="0.8"/>
<text x="61.5" y="420.45" text-anchor="end" font-size="6.8" fill="#555" stroke="#555" stroke-width="0.1" font-family="Liberation Sans">15</text>
<line x1="63.5" y1="384.00" x2="66" y2="384.00" stroke="#888" stroke-width="0.8"/>
<text x="61.5" y="386.30" text-anchor="end" font-size="6.8" fill="#555" stroke="#555" stroke-width="0.1" font-family="Liberation Sans">30</text>
<line x1="63.5" y1="349.85" x2="66" y2="349.85" stroke="#888" stroke-width="0.8"/>
<text x="61.5" y="352.15" text-anchor="end" font-size="6.8" fill="#555" stroke="#555" stroke-width="0.1" font-family="Liberation Sans">45</text>
<line x1="63.5" y1="315.70" x2="66" y2="315.70" stroke="#888" stroke-width="0.8"/>
<text x="61.5" y="318.00" text-anchor="end" font-size="6.8" fill="#555" stroke="#555" stroke-width="0.1" font-family="Liberation Sans">60</text>
</svg>
<div class="a" style="left:305.3px;top:474.1px;width:56.3px;height:15.6px;background:#efefef;border-radius:4.5px"></div>
<div class="a" style="left:365.3px;top:474.1px;width:56.3px;height:15.6px;background:#efefef;border-radius:4.5px"></div>
<div class="a" style="left:425.3px;top:474.1px;width:56.3px;height:15.6px;background:#efefef;border-radius:4.5px"></div>
<div class="a" style="left:485.3px;top:474.1px;width:56.3px;height:15.6px;background:#efefef;border-radius:4.5px"></div>
<div class="a" style="left:319.20px;top:479.4px;width:5px;height:5.2px;background:#d4e4fb;border-radius:0.8px"></div>
<div class="t" style="left:327.20px;top:479px;font-size:6.3px;color:#2e2e2e;-webkit-text-stroke:0.15px #2e2e2e">Booked</div>
<div class="a" style="left:372.20px;top:479.4px;width:5px;height:5.2px;background:#a9cbf6;border-radius:0.8px"></div>
<div class="t" style="left:380.20px;top:479px;font-size:6.3px;color:#2e2e2e;-webkit-text-stroke:0.15px #2e2e2e">Rescheduled</div>
<div class="a" style="left:434.95px;top:479.4px;width:5px;height:5.2px;background:#88b6f3;border-radius:0.8px"></div>
<div class="t" style="left:442.95px;top:479px;font-size:6.3px;color:#2e2e2e;-webkit-text-stroke:0.15px #2e2e2e">No Shows</div>
<div class="a" style="left:502.95px;top:479.4px;width:5px;height:5.2px;background:#5597ef;border-radius:0.8px"></div>
<div class="t" style="left:510.95px;top:479px;font-size:6.3px;color:#2e2e2e;-webkit-text-stroke:0.15px #2e2e2e">Held</div>
</body></html>
